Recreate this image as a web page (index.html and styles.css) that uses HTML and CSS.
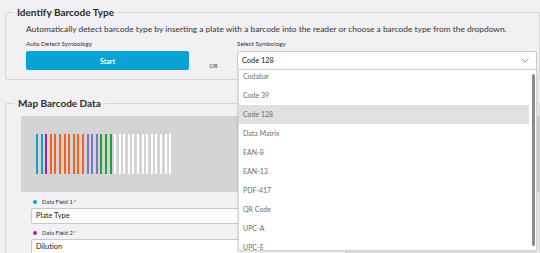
FILE: index.html
```html
<!DOCTYPE html>
<html>
<head>
<meta charset="utf-8">
<link rel="stylesheet" href="styles.css">
</head>
<body>
<div class="page">
  <fieldset class="panel identify">
    <legend>Identify Barcode Type</legend>
    <p class="desc">Automatically detect barcode type by inserting a plate with a barcode into the reader or choose a barcode type from the dropdown.</p>
    <div class="row">
      <div class="col auto">
        <div class="small-label">Auto Detect Symbology</div>
        <button class="start">Start</button>
      </div>
      <div class="or">OR</div>
      <div class="col sym">
        <div class="small-label">Select Symbology</div>
        <div class="select-wrap">
          <div class="select">
            <span>Code 128</span>
            <svg class="chev" width="8" height="5" viewBox="0 0 8 5"><path d="M0.5 0.5 L4 4 L7.5 0.5" fill="none" stroke="#8a8a8a" stroke-width="0.9"/></svg>
          </div>
          <div class="menu">
            <ul class="options">
              <li>Codabar</li>
              <li>Code 39</li>
              <li class="active">Code 128</li>
              <li>Data Matrix</li>
              <li>EAN-8</li>
              <li>EAN-13</li>
              <li>PDF-417</li>
              <li>QR Code</li>
              <li>UPC-A</li>
              <li>UPC-E</li>
            </ul>
            <div class="scrollbar"></div>
          </div>
        </div>
      </div>
    </div>
  </fieldset>

  <fieldset class="panel map">
    <legend>Map Barcode Data</legend>
    <div class="preview">
      <div class="bars">
        <i class="b c1"></i><i class="b c1"></i><i class="b c2"></i>
        <i class="b c3"></i><i class="b c3"></i><i class="b c3"></i><i class="b c3"></i><i class="b c3"></i><i class="b c3"></i><i class="b c3"></i><i class="b c3"></i>
        <i class="b c4"></i><i class="b c4"></i><i class="b c4"></i>
        <i class="b c5"></i><i class="b c5"></i><i class="b c5"></i>
        <i class="b"></i><i class="b"></i><i class="b"></i><i class="b"></i><i class="b"></i><i class="b"></i><i class="b"></i><i class="b"></i><i class="b"></i><i class="b"></i><i class="b"></i><i class="b"></i><i class="b"></i>
      </div>
    </div>
    <div class="field">
      <div class="field-label"><span class="dot d1"></span>Data Field 1 <span class="req">*</span></div>
      <div class="input">Plate Type</div>
    </div>
    <div class="field">
      <div class="field-label"><span class="dot d2"></span>Data Field 2 <span class="req">*</span></div>
      <div class="input">Dilution</div>
    </div>
  </fieldset>
</div>
</body>
</html>
```

FILE: styles.css
```css
* { box-sizing: border-box; }
html, body { margin: 0; padding: 0; }
body {
  width: 540px;
  height: 253px;
  overflow: hidden;
  background: #f1f1f3;
  font-family: Lato, "Open Sans", sans-serif;
  color: #333;
}
.page {
  padding: 6px 0 0 5px;
  height: 253px;
  overflow: hidden;
}
.panel {
  margin: 0;
  width: 535px;
  border: 1px solid #d6d6d8;
  border-radius: 2px;
  padding: 6px 0 9px 20px;
  min-width: 0;
}
.panel legend {
  padding: 0 4px;
  margin-left: -13px;
  font-weight: 700;
  font-size: 10px;
  line-height: 12px;
  color: #2a2a2a;
}
.desc {
  margin: 0;
  font-size: 8.4px;
  line-height: 11px;
  color: #333;
  white-space: nowrap;
}
.row {
  display: flex;
  align-items: flex-start;
  margin-top: 5px;
}
.small-label {
  font-size: 6.3px;
  line-height: 8px;
  color: #333;
  margin-bottom: 3px;
}
.auto { width: 163px; }
.start {
  display: block;
  width: 163px;
  height: 19px;
  border: 0;
  border-radius: 2px;
  background: #0aa2d2;
  color: #fff;
  font-family: inherit;
  font-weight: 700;
  font-size: 7px;
  padding: 0;
}
.or {
  width: 48px;
  text-align: center;
  font-size: 5.8px;
  color: #444;
  margin-top: 22px;
  padding-left: 1px;
}
.sym { width: 300px; }
.select-wrap { position: relative; }
.select {
  height: 19px;
  background: #fff;
  border: 1px solid #c9c9cb;
  border-radius: 2px;
  display: flex;
  align-items: center;
  justify-content: space-between;
  padding: 0 7px 0 4px;
  font-size: 7.4px;
  color: #222;
}
.chev { display: block; }
.menu {
  position: absolute;
  left: 1px;
  top: 18px;
  width: 299px;
  height: 182px;
  background: #fff;
  border: 1px solid #d4d4d6;
  box-shadow: 0 1px 3px rgba(0,0,0,0.18);
  overflow: hidden;
  z-index: 5;
}
.options {
  list-style: none;
  margin: -3px 0 0 0;
  padding: 0;
  width: 290px;
}
.options li {
  height: 19px;
  line-height: 19px;
  padding-left: 4px;
  font-size: 7px;
  color: #6e6e6e;
}
.options li.active { background: #e0e0e0; }
.scrollbar {
  position: absolute;
  right: 1px;
  top: 4px;
  width: 3px;
  height: 172px;
  border-radius: 2px;
  background: #8b8b8b;
}
.map {
  margin-top: 17px;
  padding: 7px 0 0 15px;
  height: 170px;
}
.map legend { margin-left: -7px; }
.preview {
  height: 76px;
  width: 518px;
  background: #d4d4d4;
  padding: 18px 0 0 15px;
}
.bars {
  display: flex;
  gap: 2.6px;
  height: 40px;
}
.b {
  display: block;
  width: 2px;
  height: 40px;
  background: #fff;
}
.c1 { background: #1a9dcf; }
.c2 { background: #a1278f; }
.c3 { background: #f26422; }
.c4 { background: #7c76c8; }
.c5 { background: #1fa33a; }
.field {
  margin-left: 10px;
  width: 316px;
}
.field-label {
  display: flex;
  align-items: center;
  font-size: 5.8px;
  line-height: 8px;
  color: #333;
  margin: 6px 0 2px 2px;
}
.field + .field .field-label { margin-top: 5px; }
.dot {
  width: 4px;
  height: 4px;
  border-radius: 50%;
  margin-right: 5px;
}
.d1 { background: #0aa2d2; }
.d2 { background: #a1278f; }
.req { color: #d0021b; margin-left: 1px; }
.input {
  height: 16px;
  background: #fff;
  border: 1px solid #c9c9cb;
  border-radius: 2px;
  font-size: 7.4px;
  line-height: 14px;
  padding-left: 4px;
  color: #222;
}
```
